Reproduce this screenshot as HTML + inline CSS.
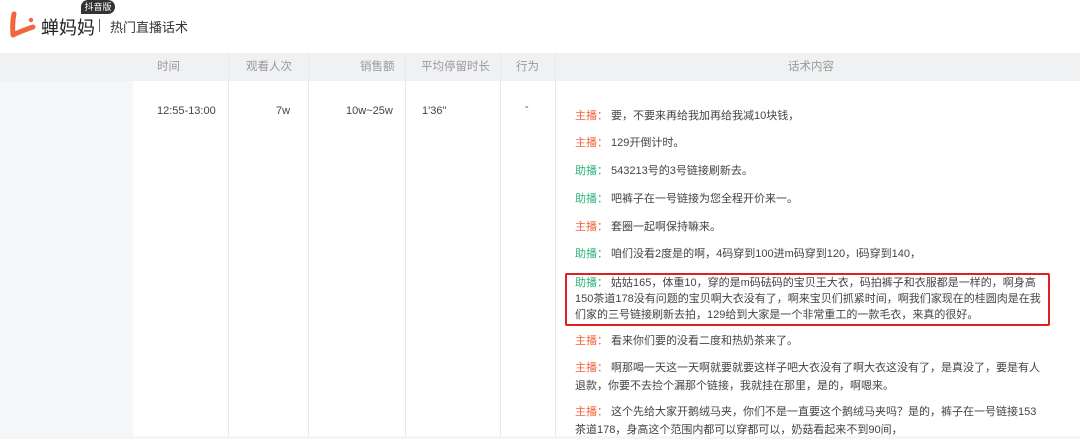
<!DOCTYPE html>
<html><head><meta charset="utf-8"><style>
*{margin:0;padding:0;box-sizing:border-box}
body{width:1080px;height:436px;overflow:hidden;background:#f5f6f8;font-family:"Liberation Sans","Noto Sans CJK SC",sans-serif;font-size:11px;color:#333;position:relative}
.hdr{position:absolute;left:0;top:0;width:1080px;height:53px;background:#fff}
.brand{position:absolute;left:41px;top:14px;font-size:18px;color:#222}
.badge{position:absolute;left:81px;top:0;width:34px;height:14px;background:#333;color:#fff;font-size:9px;line-height:14px;text-align:center;border-radius:7px 7px 7px 0}
.sep{position:absolute;left:99px;top:19px;width:1px;height:13px;background:#666}
.sub{position:absolute;left:110px;top:17px;font-size:13px;color:#333}
.th{position:absolute;top:53px;left:0;width:1080px;height:28px;background:#f0f1f3}
.th span{position:absolute;color:#999;font-size:11.5px;line-height:28px}
.c{position:absolute;color:#444;font-size:11px;line-height:18px;top:102px}
.vl{position:absolute;top:53px;width:1px;height:383px;background:#e8e8e8}
.panel{position:absolute;left:133px;top:81px;width:947px;height:355px;background:#fff}
.ln{position:absolute;left:575px;width:472px;line-height:18px;color:#444;font-size:11px}
.r{color:#f2633d}.g{color:#2fb37d}
.box{position:absolute;left:565px;top:273px;width:485px;height:53px;border:2px solid #e02020;border-radius:2px}
</style></head><body>
<div class="hdr">
<svg style="position:absolute;left:9px;top:11px" width="28" height="28" viewBox="0 0 28 28"><path d="M5 3 Q3 12 4 24 Q12 20 24 16" fill="none" stroke="#f0673f" stroke-width="5" stroke-linecap="round" stroke-linejoin="round"/><circle cx="22" cy="9" r="2.2" fill="#f0673f"/></svg>
<div class="brand">蝉妈妈</div>
<div class="badge">抖音版</div>
<div class="sep"></div>
<div class="sub">热门直播话术</div>
</div>
<div class="th">
<span style="left:157px">时间</span>
<span style="left:246px">观看人次</span>
<span style="left:360px">销售额</span>
<span style="left:421px">平均停留时长</span>
<span style="left:516px">行为</span>
<span style="left:788px">话术内容</span>
</div>
<div class="panel"></div>
<div class="vl" style="left:228px"></div>
<div class="vl" style="left:308px"></div>
<div class="vl" style="left:405px"></div>
<div class="vl" style="left:500px"></div>
<div class="vl" style="left:555px"></div>
<div class="c" style="left:157px">12:55-13:00</div>
<div class="c" style="left:276px">7w</div>
<div class="c" style="left:346px">10w~25w</div>
<div class="c" style="left:422px">1'36"</div>
<div class="c" style="left:525px;top:98px">-</div>
<div class="ln" style="top:107px"><span class="r">主播：</span> 要，不要来再给我加再给我减10块钱，</div>
<div class="ln" style="top:134px"><span class="r">主播：</span> 129开倒计时。</div>
<div class="ln" style="top:162px"><span class="g">助播：</span> 543213号的3号链接刷新去。</div>
<div class="ln" style="top:190px"><span class="g">助播：</span> 吧裤子在一号链接为您全程开价来一。</div>
<div class="ln" style="top:218px"><span class="r">主播：</span> 套圈一起啊保持嘛来。</div>
<div class="ln" style="top:245px"><span class="g">助播：</span> 咱们没看2度是的啊，4码穿到100进m码穿到120，l码穿到140，</div>
<div class="box"></div>
<div class="ln" style="top:275px;line-height:16px"><span class="g">助播：</span> 姑姑165，体重10，穿的是m码砝码的宝贝王大衣，码拍裤子和衣服都是一样的，啊身高<br>150茶道178没有问题的宝贝啊大衣没有了，啊来宝贝们抓紧时间，啊我们家现在的桂圆肉是在我<br>们家的三号链接刷新去拍，129给到大家是一个非常重工的一款毛衣，来真的很好。</div>
<div class="ln" style="top:332px"><span class="r">主播：</span> 看来你们要的没看二度和热奶茶来了。</div>
<div class="ln" style="top:359px"><span class="r">主播：</span> 啊那喝一天这一天啊就要就要这样子吧大衣没有了啊大衣这没有了，是真没了，要是有人<br>退款，你要不去捡个漏那个链接，我就挂在那里，是的，啊嗯来。</div>
<div class="ln" style="top:403px"><span class="r">主播：</span> 这个先给大家开鹅绒马夹，你们不是一直要这个鹅绒马夹吗？是的，裤子在一号链接153<br>茶道178，身高这个范围内都可以穿都可以，奶菇看起来不到90间，</div>
</body></html>
